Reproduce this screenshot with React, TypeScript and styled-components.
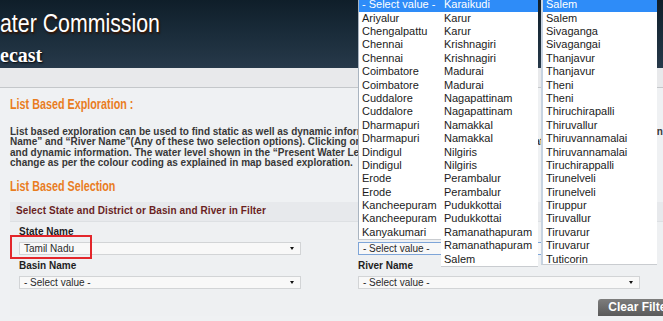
import styled, { createGlobalStyle } from "styled-components";

const GlobalStyle = createGlobalStyle`
  html, body {
    margin: 0;
    padding: 0;
  }
  body {
    background: #eff1f3;
    font-family: "Liberation Sans", Arial, sans-serif;
    overflow: hidden;
  }
`;

const Page = styled.div`
  position: relative;
  width: 663px;
  height: 321px;
  overflow: hidden;
  background: #eff1f3;
  display: flex;
  flex-direction: column;
`;

const Header = styled.header`
  height: 68px;
  flex-shrink: 0;
  background: linear-gradient(180deg, #0f1e29 0%, #1a2c3a 50%, #27394a 100%);
  color: #fff;
  display: flex;
  flex-direction: column;
`;

// narrow face is not installed, so the condensed look is squeezed by hand
const Title = styled.div`
  font-family: "Liberation Sans", Arial, sans-serif;
  font-size: 26px;
  line-height: 30px;
  margin-top: 8px;
  white-space: nowrap;
  transform: scaleX(0.82);
  transform-origin: left center;
  text-shadow: 1px 1px 1px #3a1c0c, 1px 2px 2px #2a1408;
`;

const Subtitle = styled.div`
  font-family: "Liberation Serif", "Times New Roman", serif;
  font-weight: bold;
  font-size: 20px;
  line-height: 22px;
  margin-top: 6px;
  white-space: nowrap;
  text-shadow: 1px 1px 2px #000;
`;

const NavBand = styled.div`
  height: 19px;
  flex-shrink: 0;
  background: #e8e9eb;
  border-bottom: 1px solid #c4c7ca;
`;

const Content = styled.main`
  padding: 0 10px;
`;

const SectionHeading = styled.h2<{ $top: number }>`
  margin: ${(p) => p.$top}px 0 0;
  font-family: "Liberation Sans", Arial, sans-serif;
  font-weight: bold;
  font-size: 14px;
  line-height: 16px;
  color: #e97d1f;
  white-space: nowrap;
  transform: scaleX(0.77);
  transform-origin: left center;
`;

const Description = styled.div`
  margin-top: 15px;
  width: 690px;
  font-size: 10px;
  font-weight: bold;
  line-height: 10.3px;
  color: #383838;
`;

const DescLine = styled.div`
  white-space: nowrap;
`;

const Panel = styled.section`
  margin-top: 8px;
  width: 680px;
  background: #eef0f2;
`;

const PanelHeader = styled.div`
  height: 20px;
  box-sizing: border-box;
  padding: 3px 6px 0;
  background: #e7e9ec;
  border-bottom: 1px solid #dde0e3;
  font-size: 10px;
  font-weight: bold;
  line-height: 12px;
  letter-spacing: 0.1px;
  color: #6a1f1f;
  white-space: nowrap;
`;

const PanelBody = styled.div`
  padding: 3px 9px 0;
`;

const FieldGrid = styled.div`
  display: grid;
  grid-template-columns: 282px 282px;
  column-gap: 57px;
  row-gap: 4px;
`;

const Field = styled.div`
  display: flex;
  flex-direction: column;
`;

const Label = styled.label`
  font-size: 10px;
  font-weight: bold;
  line-height: 13px;
  color: #1e1e1e;
  margin-bottom: 4px;
`;

const SelectBox = styled.div<{ $focused?: boolean }>`
  position: relative;
  height: 13px;
  box-sizing: border-box;
  border: 1px solid ${(p) => (p.$focused ? "#7ea5d8" : "#d2d4d6")};
  background: #f8f8f8;
  padding-left: 4px;
  font-size: 10px;
  line-height: 11px;
  color: #2a2a2a;
  white-space: nowrap;
  &::after {
    content: "";
    position: absolute;
    right: 6px;
    top: 4px;
    border-left: 2px solid transparent;
    border-right: 2px solid transparent;
    border-top: 3px solid #111;
  }
`;

const Callout = styled.div`
  position: absolute;
  left: -10px;
  top: -8px;
  width: 82px;
  height: 24px;
  box-sizing: border-box;
  border: 2px solid #e3262b;
  pointer-events: none;
`;

const ButtonRow = styled.div`
  display: flex;
  justify-content: flex-end;
  margin-top: 10px;
`;

const ClearButton = styled.button`
  height: 17px;
  padding: 0 10px;
  border: none;
  border-radius: 3px 3px 0 0;
  background: linear-gradient(180deg, #7d7d7d 0%, #5a5a5a 100%);
  color: #fff;
  font-family: "Liberation Sans", Arial, sans-serif;
  font-size: 12px;
  font-weight: bold;
  line-height: 17px;
  white-space: nowrap;
`;

const Dropdown = styled.div`
  position: absolute;
  top: 0;
  left: 358px;
  display: flex;
  align-items: flex-start;
  font-family: "Liberation Sans", Arial, sans-serif;
  font-size: 11px;
`;

const OptionList = styled.ul<{ $width: number; $height: number; $edge: string; $offset: number }>`
  list-style: none;
  margin: 0 0 0 ${(p) => p.$offset}px;
  padding: 0;
  width: ${(p) => p.$width}px;
  height: ${(p) => p.$height}px;
  box-sizing: border-box;
  overflow: hidden;
  background: #fff;
  border-left: ${(p) => p.$edge};
  border-bottom: 1px solid #c9ccd0;
`;

const Option = styled.li<{ $active?: boolean; $indent: number }>`
  height: 13.4px;
  line-height: 13.4px;
  padding-left: ${(p) => p.$indent}px;
  white-space: nowrap;
  background: ${(p) => (p.$active ? "#2e8cf8" : "transparent")};
  color: ${(p) => (p.$active ? "#fff" : "#1b1b1b")};
  &:first-child {
    margin-top: -1.8px;
  }
`;

const columnOne = [
  "- Select value -",
  "Ariyalur",
  "Chengalpattu",
  "Chennai",
  "Chennai",
  "Coimbatore",
  "Coimbatore",
  "Cuddalore",
  "Cuddalore",
  "Dharmapuri",
  "Dharmapuri",
  "Dindigul",
  "Dindigul",
  "Erode",
  "Erode",
  "Kancheepuram",
  "Kancheepuram",
  "Kanyakumari",
];

const columnTwo = [
  "Karaikudi",
  "Karur",
  "Karur",
  "Krishnagiri",
  "Krishnagiri",
  "Madurai",
  "Madurai",
  "Nagapattinam",
  "Nagapattinam",
  "Namakkal",
  "Namakkal",
  "Nilgiris",
  "Nilgiris",
  "Perambalur",
  "Perambalur",
  "Pudukkottai",
  "Pudukkottai",
  "Ramanathapuram",
  "Ramanathapuram",
  "Salem",
];

const columnThree = [
  "Salem",
  "Salem",
  "Sivaganga",
  "Sivagangai",
  "Thanjavur",
  "Thanjavur",
  "Theni",
  "Theni",
  "Thiruchirapalli",
  "Thiruvallur",
  "Thiruvannamalai",
  "Thiruvannamalai",
  "Tiruchirappalli",
  "Tirunelveli",
  "Tirunelveli",
  "Tiruppur",
  "Tiruvallur",
  "Tiruvarur",
  "Tiruvarur",
  "Tuticorin",
];

const lists = [
  { items: columnOne, width: 83, height: 240, edge: "1px solid #a9b4c0", indent: 3, offset: 0 },
  { items: columnTwo, width: 97, height: 267, edge: "0 none", indent: 3, offset: 0 },
  { items: columnThree, width: 116, height: 265, edge: "2px solid #c8d4e2", indent: 3, offset: 3 },
];

const App = () => {
  return (
    <>
      <GlobalStyle />
      <Page>
        <Header>
          <Title>ater Commission</Title>
          <Subtitle>ecast</Subtitle>
        </Header>
        <NavBand />
        <Content>
          <SectionHeading $top={8}>List Based Exploration :</SectionHeading>
          <Description>
            <DescLine>
              List based exploration can be used to find static as well as dynamic information by selecting “State Name” and “District Name” or “Basin <u>R</u>
            </DescLine>
            <DescLine>
              Name” and “River Name”(Any of these two selection options). Clicking on any site in the list shows its static data as well as
            </DescLine>
            <DescLine>
              and dynamic information. The water level shown in the “Present Water Level” column of the list will also <i>ti</i>
            </DescLine>
            <DescLine>
              change as per the colour coding as explained in map based exploration.
            </DescLine>
          </Description>
          <SectionHeading $top={10}>List Based Selection</SectionHeading>
          <Panel>
            <PanelHeader>Select State and District or Basin and River in Filter</PanelHeader>
            <PanelBody>
              <FieldGrid>
                <Field>
                  <Label>State Name</Label>
                  <SelectBox>
                    Tamil Nadu
                    <Callout />
                  </SelectBox>
                </Field>
                <Field>
                  <Label>District Name</Label>
                  <SelectBox $focused>- Select value -</SelectBox>
                </Field>
                <Field>
                  <Label>Basin Name</Label>
                  <SelectBox>- Select value -</SelectBox>
                </Field>
                <Field>
                  <Label>River Name</Label>
                  <SelectBox>- Select value -</SelectBox>
                </Field>
              </FieldGrid>
              <ButtonRow>
                <ClearButton>Clear Filter</ClearButton>
              </ButtonRow>
            </PanelBody>
          </Panel>
        </Content>
        <Dropdown>
          {lists.map((list, i) => (
            <OptionList
              key={i}
              $width={list.width}
              $height={list.height}
              $edge={list.edge}
              $offset={list.offset}
            >
              {list.items.map((name, j) => (
                <Option key={j} $active={j === 0} $indent={list.indent}>
                  {name}
                </Option>
              ))}
            </OptionList>
          ))}
        </Dropdown>
      </Page>
    </>
  );
};

export default App;
